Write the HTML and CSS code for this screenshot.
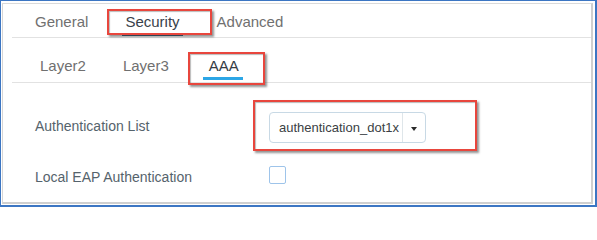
FILE: index.html
```html
<!DOCTYPE html>
<html>
<head>
<meta charset="utf-8">
<link rel="stylesheet" href="styles.css">
</head>
<body>
<div class="frame">
  <div class="panel">
    <div class="tabs">
      <div class="tab">General</div>
      <div class="tab active">Security</div>
      <div class="tab">Advanced</div>
    </div>
    <div class="subtabs">
      <div class="subtab">Layer2</div>
      <div class="subtab">Layer3</div>
      <div class="subtab active">AAA</div>
    </div>
    <div class="form">
      <div class="row row-select">
        <div class="label">Authentication List</div>
        <div class="select">
          <span class="select-value">authentication_dot1x</span>
          <span class="select-arrow"><span class="caret"></span></span>
        </div>
      </div>
      <div class="row row-check">
        <div class="label">Local EAP Authentication</div>
        <div class="checkbox"></div>
      </div>
    </div>
  </div>
  <div class="callout callout-security"></div>
  <div class="callout callout-aaa"></div>
  <div class="callout callout-select"></div>
</div>
</body>
</html>
```

FILE: styles.css
```css
* { box-sizing: border-box; }
html, body { margin: 0; padding: 0; background: #ffffff; }
body { font-family: "Liberation Sans", Arial, sans-serif; }

.frame {
  position: relative;
  width: 597px;
  height: 207px;
  border-style: solid;
  border-color: #3c76c3;
  border-width: 1px 2px 2px 1px;
  padding: 2px 2px 1px 1px;
  background: #fff;
}

.panel {
  height: 100%;
  border-style: solid;
  border-color: #dadada #cfcfcf #cfcfcf #d6d6d6;
  border-width: 1px 2px 2px 1px;
  background: #fff;
}

.tabs {
  display: flex;
  gap: 31px;
  margin-left: 9px;
  padding-left: 20px;
  padding-bottom: 1px;
  border-bottom: 1px solid #e2e2e2;
}
.tab {
  font-size: 15px;
  line-height: 17px;
  color: #707070;
  padding: 9px 3px 3px;
  border-bottom: 3px solid transparent;
}
.tab.active {
  color: #39414a;
  border-bottom-color: #1f4f6f;
}

.subtabs {
  display: flex;
  gap: 31px;
  margin-left: 9px;
  padding-left: 25px;
  padding-bottom: 2px;
  border-bottom: 1px solid #e2e2e2;
}
.subtab {
  font-size: 15px;
  line-height: 17px;
  color: #707070;
  padding: 19px 3px 3px;
  border-bottom: 3px solid transparent;
}
.subtab.active {
  color: #353c44;
  padding: 19px 4px 3px 6px;
  border-bottom-color: #2ca6e6;
}

.form {
  padding-left: 32px;
}
.row {
  display: flex;
  align-items: flex-start;
}
.label {
  width: 234px;
  font-size: 14px;
  color: #55636c;
}
.row-select { padding-top: 29px; }
.row-select .label { line-height: 28px; }
.row-check { padding-top: 23px; }
.row-check .label { line-height: 18px; padding-top: 2px; }

.select {
  display: flex;
  width: 157px;
  height: 31px;
  border: 1px solid #c8d9e5;
  border-radius: 4px;
  background: #fff;
}
.select-value {
  flex: 1;
  font-size: 13px;
  line-height: 29px;
  color: #3b3f44;
  padding-left: 9px;
  white-space: nowrap;
  overflow: hidden;
}
.select-arrow {
  width: 23px;
  border-left: 1px solid #dfe6ea;
  display: flex;
  align-items: center;
  justify-content: center;
}
.caret {
  width: 0;
  height: 0;
  border-left: 3px solid transparent;
  border-right: 3px solid transparent;
  border-top: 4px solid #2a2a2a;
  margin-top: 2px;
}

.checkbox {
  width: 17px;
  height: 18px;
  border: 1px solid #9ec4ea;
  border-radius: 2px;
  background: #fff;
}

.callout {
  position: absolute;
  border: 2px solid #e8463d;
  box-shadow: 2px 2px 2px rgba(60, 60, 60, 0.55), inset 1px 1px 1px rgba(60, 60, 60, 0.35);
}
.callout-security { left: 106px; top: 8px; width: 105px; height: 26px; }
.callout-aaa { left: 187px; top: 51px; width: 77px; height: 33px; }
.callout-select { left: 252px; top: 99px; width: 224px; height: 51px; }
```
